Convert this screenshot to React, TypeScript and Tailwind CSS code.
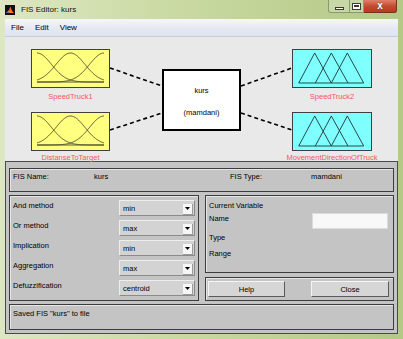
import React from 'react'

const font = { fontFamily: '"Liberation Sans", Arial, sans-serif' }

// gaussian membership curve inside a 79x38 plot box
const gauss = (c: number, s: number) => {
  const pts: string[] = []
  for (let x = 6; x <= 73; x += 0.5) {
    const y = 33 - 29 * Math.exp(-((x - c) ** 2) / (2 * s * s))
    pts.push(`${x},${y.toFixed(2)}`)
  }
  return 'M' + pts.join(' L')
}

function GaussBox() {
  return (
    <div className="h-[39px] w-[79px] border border-[#404040] bg-[#ffff80]">
      <svg width="77" height="37" viewBox="1 1 77 37">
        <g fill="none" stroke="#45452e" strokeWidth="0.9">
          <path d={gauss(6, 14.5)} />
          <path d={gauss(39.5, 14.5)} />
          <path d={gauss(73, 14.5)} />
          <path d="M6 33H73" />
        </g>
      </svg>
    </div>
  )
}

function TriBox() {
  return (
    <div className="h-[39px] w-[80px] border border-[#404040] bg-[#80ffff]">
      <svg width="78" height="37" viewBox="1 1 78 37">
        <g fill="none" stroke="#1e3434" strokeWidth="0.9">
          <path d="M6.7 34L22.7 4L39.3 34" />
          <path d="M23.3 34L39.3 4L56 34" />
          <path d="M39.3 34L55.3 4L71.7 34" />
          <path d="M6.7 34H71.7" />
        </g>
      </svg>
    </div>
  )
}

function Drop({ value }: { value: string }) {
  return (
    <div className="flex h-[16px] w-[76px] items-center border border-t-[#eeeeee] border-l-[#eeeeee] border-b-[#8a8a8a] border-r-[#8a8a8a] bg-[#d3d3d3] pl-[3px]">
      <span className="flex-1 pt-[1px]">{value}</span>
      <div className="mr-[1px] mt-[2px] flex h-[11px] w-[10px] items-center justify-center border-b border-r border-[#9a9a9a] bg-[#f6f6f6]">
        <svg width="5" height="3" viewBox="0 0 5 3">
          <path d="M0 0H5L2.5 3Z" fill="#000" />
        </svg>
      </div>
    </div>
  )
}

const box = 'border border-[#3c3c3c] shadow-[inset_1px_1px_0_#e6e6e6]'
const btn =
  'flex h-[16px] items-center justify-center border border-t-[#f4f4f4] border-l-[#f4f4f4] border-b-[#5a5a5a] border-r-[#5a5a5a] bg-[#d6d6d6]'

const methods: [string, string][] = [
  ['And method', 'min'],
  ['Or method', 'max'],
  ['Implication', 'min'],
  ['Aggregation', 'max'],
  ['Defuzzification', 'centroid'],
]

export default function App() {
  return (
    <div
      className="flex h-[339px] w-[403px] flex-col overflow-hidden bg-[linear-gradient(to_right,#dde7c2,#c9d9a1_45%,#b4c986)] text-black"
      style={font}
    >
      {/* title bar */}
      <div className="relative flex h-[19px] items-center pl-[5px]">
        <svg width="10" height="10" viewBox="0 0 10 10">
          <rect width="10" height="10" fill="#111" />
          <path d="M1 8L4 5L5.5 1.5L7 6L9 8Z" fill="#f08020" />
          <path d="M4 5L5.5 1.5L5 6Z" fill="#d23a10" />
          <path d="M1 8L3 6.5L4 8Z" fill="#3a6ad0" />
        </svg>
        <span className="ml-[6px] text-[8px] text-[#111]">FIS Editor: kurs</span>
        <div className="ml-auto mr-[6px] flex h-[13px] self-start">
          <div className="flex w-[22px] items-center justify-center rounded-bl-[3px] border border-t-0 border-[#8a9a70] bg-[#cfdbb0]/70">
            <div className="mt-[4px] h-[3px] w-[9px] border border-[#3a3a3a] bg-white" />
          </div>
          <div className="flex w-[14px] items-center justify-center border-b border-r border-[#8a9a70] bg-[#cfdbb0]/70">
            <div className="h-[7px] w-[9px] border border-[#3a3a3a] bg-white p-[1px]">
              <div className="h-full w-full border-t-2 border-[#3a3a3a]" />
            </div>
          </div>
          <div className="flex w-[33px] items-center justify-center rounded-br-[3px] border-b border-r border-[#7a3020] bg-[linear-gradient(to_bottom,#e0806a,#c64a30_50%,#b83a20)]">
            <span className="text-[10px] font-bold leading-none text-white [text-shadow:0_0_1px_#333]">x</span>
          </div>
        </div>
      </div>

      <div className="mx-[5px] mb-[5px] flex flex-1 flex-col">
        {/* menu bar */}
        <div className="flex h-[18px] items-center gap-[11px] border-b border-[#c9cdd6] bg-[linear-gradient(to_bottom,#f6f7f9,#e6e9f2_55%,#dfe4f1)] pl-[6px] text-[8px]">
          <span>File</span>
          <span>Edit</span>
          <span>View</span>
        </div>

        {/* diagram */}
        <div className="relative h-[124px] bg-[#e9e9e9]">
          <svg className="absolute inset-0" width="393" height="124">
            <g stroke="#000" strokeWidth="1.6" strokeDasharray="4 3" fill="none">
              <path d="M105 31L157 49" />
              <path d="M105 93L157 76" />
              <path d="M236 49L287 31" />
              <path d="M236 76L287 93" />
            </g>
          </svg>
          <div className="absolute left-[26px] top-[12px]">
            <GaussBox />
          </div>
          <div className="absolute left-[26px] top-[75px]">
            <GaussBox />
          </div>
          <div className="absolute left-[287px] top-[12px]">
            <TriBox />
          </div>
          <div className="absolute left-[287px] top-[75px]">
            <TriBox />
          </div>
          <div className="absolute left-[0px] top-[54px] w-[131px] text-center text-[7.5px] text-[#f25858]">SpeedTruck1</div>
          <div className="absolute left-[0px] top-[115px] w-[131px] text-center text-[7.5px] text-[#f25858]">DistanseToTarget</div>
          <div className="absolute left-[247px] top-[54px] w-[160px] text-center text-[7.5px] text-[#f25858]">SpeedTruck2</div>
          <div className="absolute left-[247px] top-[115px] w-[160px] text-center text-[7.5px] text-[#f25858]">MovementDirectionOfTruck</div>
          <div className="absolute left-[157px] top-[32px] flex h-[62px] w-[79px] flex-col items-center border-2 border-black bg-white pt-[14px] text-[7.5px]">
            <span>kurs</span>
            <span className="mt-[11px]">(mamdani)</span>
          </div>
        </div>

        {/* bottom panel */}
        <div className="flex flex-1 flex-col gap-[3px] border border-[#4a4a4a] bg-[#c4c4c4] pb-[3px] pl-[3px] pr-[3px] pt-[6px] text-[7.5px] leading-[9px]">
          <div className={`${box} flex h-[24px] items-start pl-[3px] pt-[3px]`}>
            <span className="w-[81px]">FIS Name:</span>
            <span className="w-[136px]">kurs</span>
            <span className="w-[81px]">FIS Type:</span>
            <span>mamdani</span>
          </div>

          <div className="flex h-[106px] gap-[6px]">
            <div className={`${box} flex w-[190px] flex-col pt-[4px]`}>
              {methods.map(([label, value]) => (
                <div key={label} className="flex h-[20.5px] items-start pl-[3px] pr-[3px]">
                  <span className="pt-[1px]">{label}</span>
                  <div className="ml-auto">
                    <Drop value={value} />
                  </div>
                </div>
              ))}
            </div>
            <div className="flex flex-1 flex-col gap-[4px]">
              <div className={`${box} flex h-[78px] flex-col pl-[3px] pt-[5px]`}>
                <span className="h-[12px]">Current Variable</span>
                <div className="flex h-[18.5px] items-start">
                  <span className="pt-[1px]">Name</span>
                  <div className="ml-auto mr-[5px] h-[16px] w-[76px] border border-[#dcdcdc] bg-[#f8f8f8]" />
                </div>
                <span className="h-[17.5px] pt-[1px]">Type</span>
                <span>Range</span>
              </div>
              <div className={`${box} flex h-[24px] items-start justify-between pl-[2px] pr-[4px] pt-[3px]`}>
                <div className={`${btn} w-[77px]`}>Help</div>
                <div className={`${btn} w-[78px]`}>Close</div>
              </div>
            </div>
          </div>

          <div className={`${box} flex-1 pl-[3px] pt-[4px]`}>Saved FIS "kurs" to file</div>
        </div>
      </div>
    </div>
  )
}
